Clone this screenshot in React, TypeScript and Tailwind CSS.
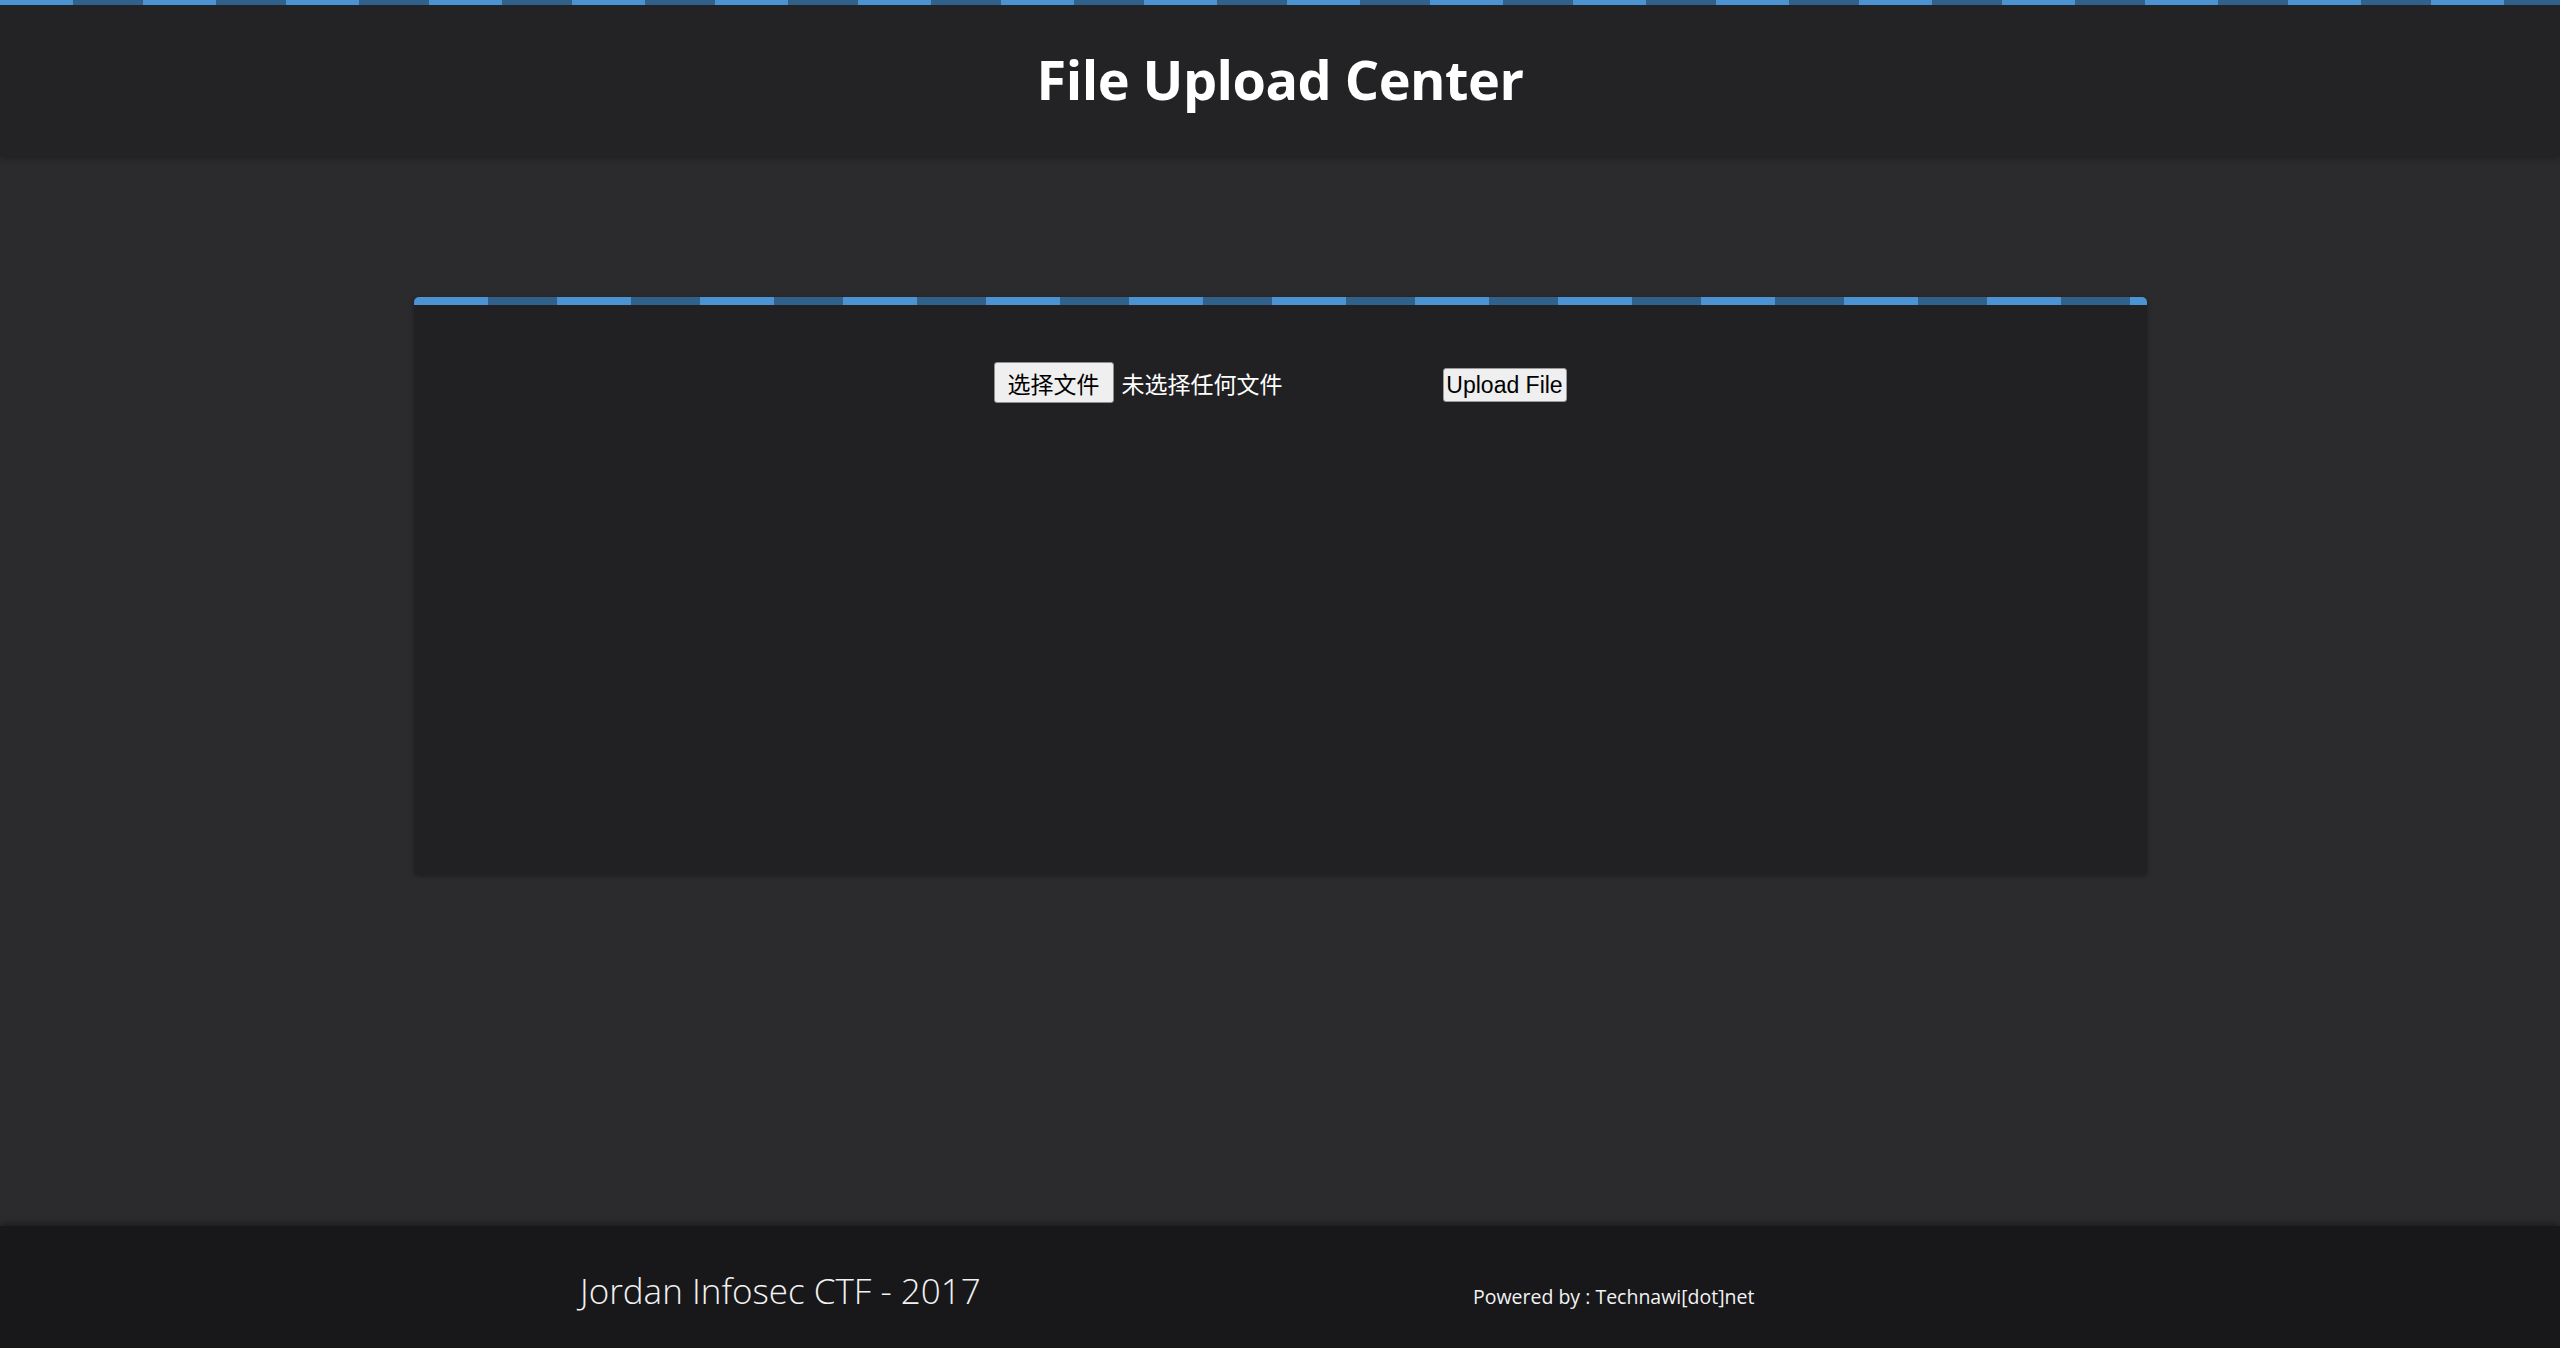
export default function App() {
  return (
    <div className="flex min-h-screen flex-col bg-[#2b2b2d] font-['Open_Sans','Noto_Sans',sans-serif] text-white">
      {/* Header with striped top bar */}
      <header className="h-[157px] bg-[#232325] shadow-[0_2px_6px_rgba(0,0,0,0.25)]">
        <div className="h-[5px] bg-[repeating-linear-gradient(90deg,#4b93d2_0_73px,#30618a_73px_143px)]" />
        <h1 className="pt-[42px] text-center text-[54px] font-bold leading-[64px] tracking-[-0.5px]">
          File Upload Center
        </h1>
      </header>

      {/* Upload panel */}
      <main className="flex-1 pt-[140px]">
        <div className="mx-auto h-[578px] w-[1733px] overflow-hidden rounded-[5px] bg-[#212123] shadow-[0_1px_4px_rgba(0,0,0,0.35)]">
          <div className="h-[8px] bg-[repeating-linear-gradient(90deg,#4b93d2_0_74px,#30618a_74px_143px)]" />
          <form className="flex items-end pl-[580px] pt-[57px]">
            <div className="flex w-[449px] items-baseline font-['Noto_Sans_CJK_SC',sans-serif]">
              <button
                type="button"
                className="h-[41px] w-[120px] rounded-[3px] border border-[#8f8f8f] bg-[#efefef] p-0 text-[23px] leading-[30px] text-black"
              >
                选择文件
              </button>
              <span className="ml-[8px] text-[23px] leading-[30px]">未选择任何文件</span>
            </div>
            <button
              type="button"
              className="mb-[1px] h-[34px] w-[124px] rounded-[3px] border border-[#9a9a9a] bg-[#efefef] p-0 font-['Liberation_Sans',Arial,sans-serif] text-[23px] leading-[26px] text-black"
            >
              Upload File
            </button>
          </form>
        </div>
      </main>

      {/* Footer */}
      <footer className="h-[122px] bg-[#18181a] shadow-[0_-3px_6px_rgba(0,0,0,0.3)]">
        <div className="flex items-baseline pt-[39px]">
          <p className="ml-[580px] w-[893px] text-[35px] font-light text-[#f2f2f2]">
            Jordan Infosec CTF - 2017
          </p>
          <p className="text-[19.5px] text-[#f2f2f2]">Powered by : Technawi[dot]net</p>
        </div>
      </footer>
    </div>
  );
}
